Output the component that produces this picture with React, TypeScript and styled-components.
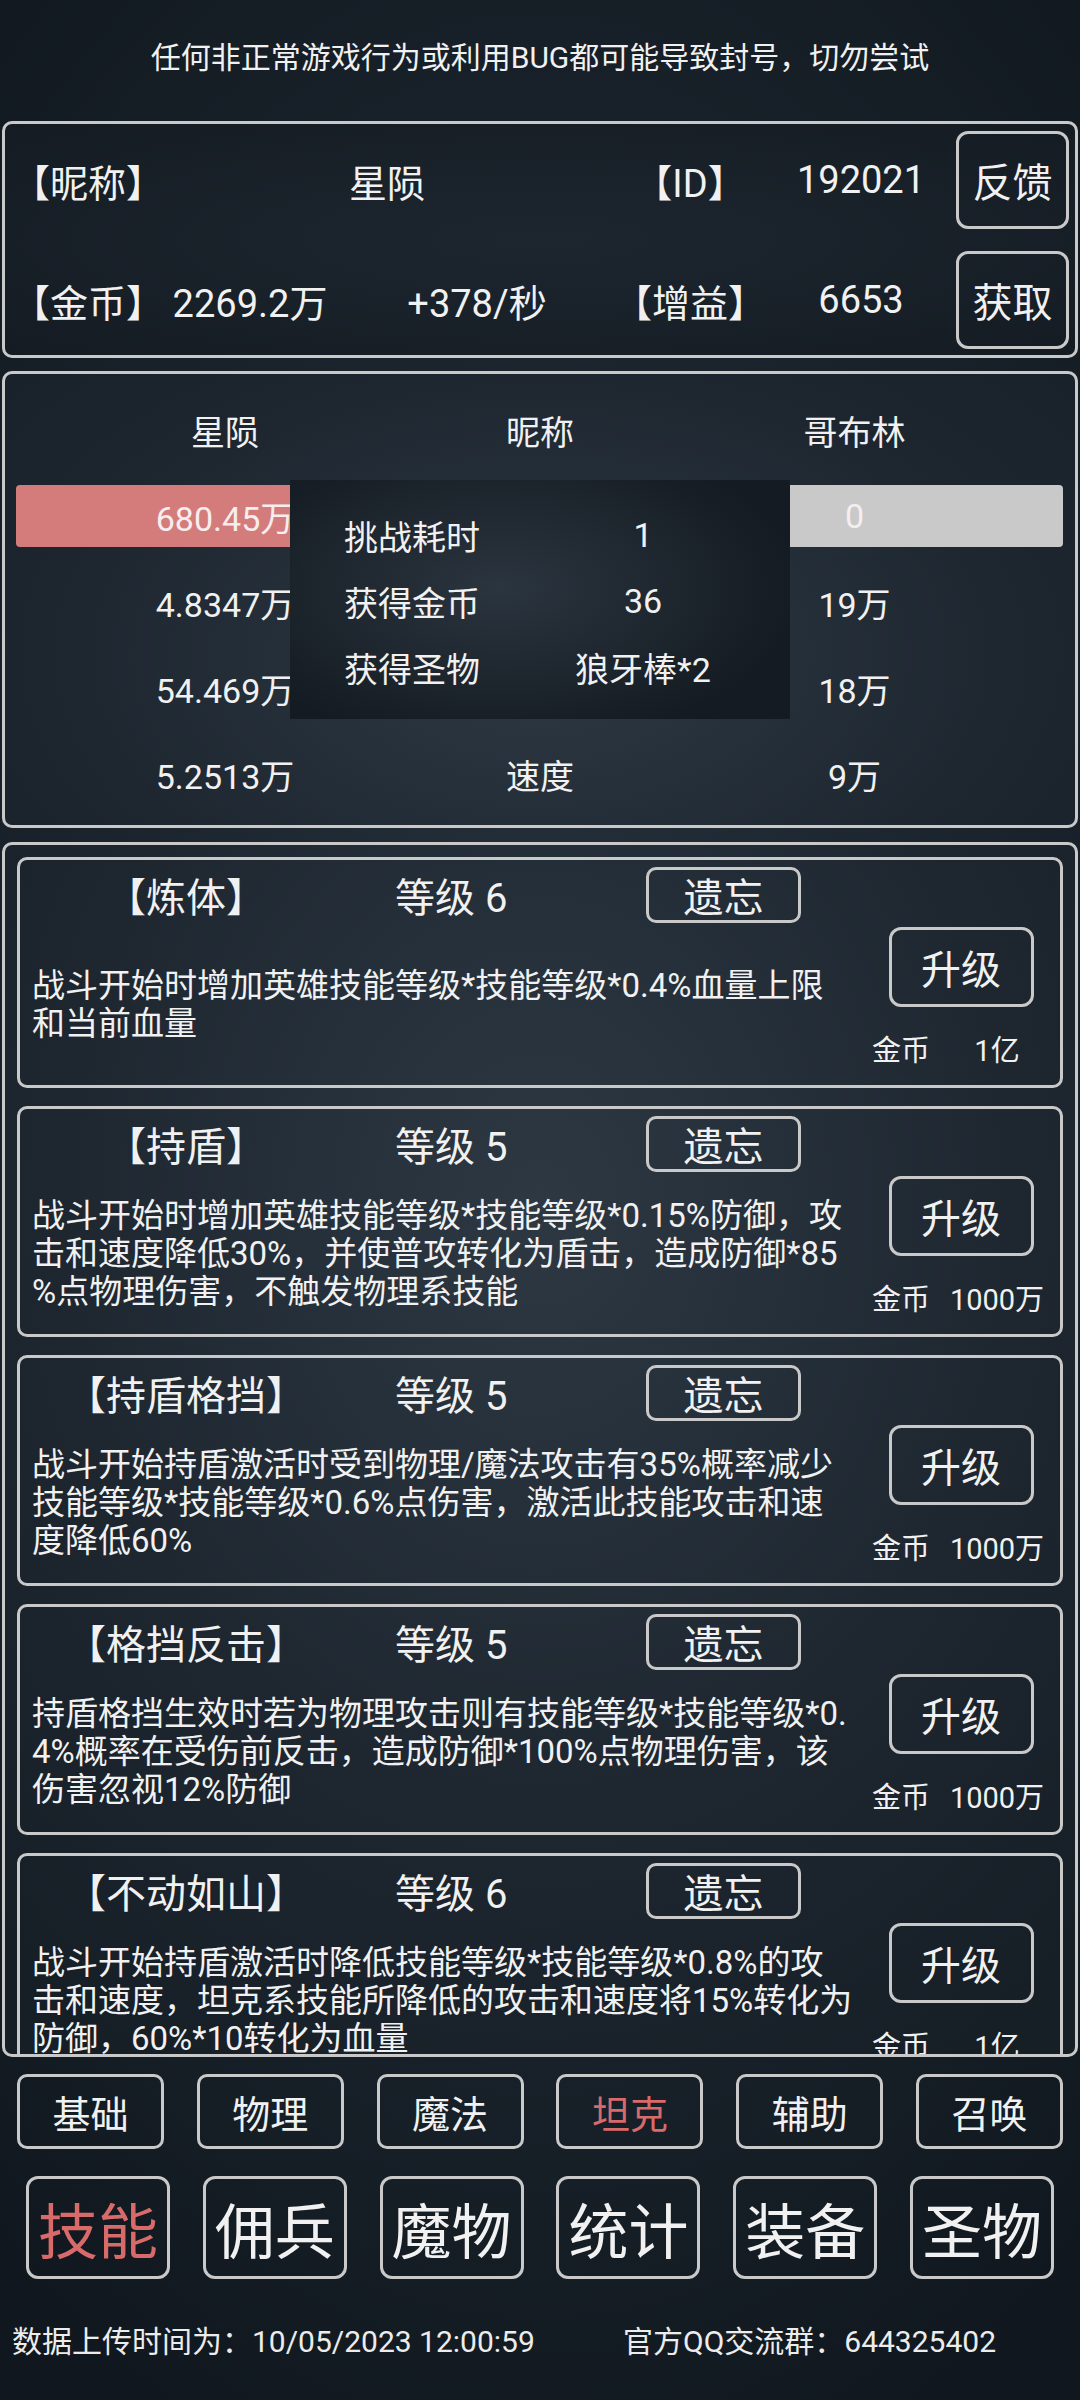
import React from 'react';
import styled, { createGlobalStyle, css } from 'styled-components';

const FONT = `Roboto, "Noto Sans CJK SC", "Noto Sans", sans-serif`;
const LINE = '#c9c9c9';
const TEXT = '#f1f1f1';
const RED = '#d96a6a';

const GlobalStyle = createGlobalStyle`
  html, body { margin: 0; padding: 0; }
  body {
    width: 1080px;
    height: 2400px;
    overflow: hidden;
    background: radial-gradient(ellipse 900px 1500px at 50% 45%, #26313b 0%, #1a232c 55%, #10171e 100%);
    font-family: ${FONT};
    color: ${TEXT};
  }
  * { box-sizing: border-box; }
`;

const Screen = styled.div`
  width: 1080px;
  height: 2400px;
  display: flex;
  flex-direction: column;
`;

const Notice = styled.div`
  height: 116px;
  padding-bottom: 6px;
  display: flex;
  align-items: center;
  justify-content: center;
  font-size: 30px;
`;

const Panel = styled.section`
  margin: 0 2px;
  border: 3px solid ${LINE};
  border-radius: 10px;
`;

/* ---------- player info ---------- */
const InfoPanel = styled(Panel)`
  margin-top: 5px;
  padding: 7px 6px 6px 7px;
  display: grid;
  grid-template-columns: 148px 180px 274px 152px 190px 113px;
  grid-template-rows: 98px 98px;
  row-gap: 22px;
  align-items: center;
  font-size: 38px;
  background: radial-gradient(ellipse at 50% 50%, #1d262f 0%, #141b23 100%);
`;

const Label = styled.span`
  justify-self: start;
  white-space: nowrap;
`;

const Cell = styled.span<{ $span?: number }>`
  justify-self: center;
  white-space: nowrap;
  ${({ $span }) =>
    $span &&
    css`
      grid-column: span ${$span};
    `}
`;

const BoxButton = styled.button`
  display: flex;
  align-items: center;
  justify-content: center;
  padding: 0;
  background: transparent;
  color: ${TEXT};
  font-family: ${FONT};
  border: 3px solid ${LINE};
  border-radius: 12px;
`;

const SideButton = styled(BoxButton)`
  width: 113px;
  height: 98px;
  font-size: 40px;
`;

/* ---------- battle ---------- */
const BattlePanel = styled(Panel)`
  position: relative;
  margin-top: 13px;
  padding: 25px 12px 20px 11px;
  display: flex;
  flex-direction: column;
  gap: 24px;
  font-size: 34px;
  background: radial-gradient(ellipse 700px 420px at 50% 62%, #2e3944 0%, #1d262f 70%, #19212a 100%);
`;

const StatRow = styled.div<{ $hp?: boolean }>`
  height: 62px;
  display: grid;
  grid-template-columns: 418px 1fr 417px;
  align-items: center;
  justify-items: center;
  ${({ $hp }) =>
    $hp &&
    css`
      border-radius: 4px;
      background: linear-gradient(to right, #d47c7c 50%, #c9c9c9 50%);
      color: #f6eeee;
    `}
`;

const ResultBox = styled.div`
  position: absolute;
  left: 285px;
  top: 106px;
  width: 500px;
  height: 239px;
  padding: 22px 0 19px 54px;
  display: grid;
  grid-template-columns: 196px 206px;
  grid-auto-rows: 66px;
  align-items: center;
  background: radial-gradient(ellipse 300px 160px at 42% 45%, #2b353f 0%, #18202800 100%), #141b22;
`;

const ResultValue = styled.span`
  justify-self: center;
  white-space: nowrap;
`;

/* ---------- skills ---------- */
const SkillPanel = styled(Panel)`
  margin-top: 14px;
  height: 1215px;
  overflow: hidden;
  padding: 12px 12px 0;
  display: flex;
  flex-direction: column;
  gap: 18px;
  background: radial-gradient(ellipse 800px 1000px at 50% 30%, #2d3843 0%, #1e2730 60%, #161e26 100%);
`;

const Card = styled.div`
  flex-shrink: 0;
  height: 231px;
  border: 3px solid ${LINE};
  border-radius: 10px;
  display: flex;
  flex-direction: column;
`;

const CardHead = styled.div`
  padding-top: 5px;
  height: 64px;
  display: grid;
  grid-template-columns: 332px 294px 155px;
  align-items: center;
  font-size: 40px;
`;

const SkillName = styled.span`
  justify-self: center;
  white-space: nowrap;
`;

const SkillLevel = styled.span`
  padding-left: 43px;
  white-space: nowrap;
`;

const ForgetButton = styled(BoxButton)`
  width: 155px;
  height: 56px;
  border-radius: 10px;
  font-size: 40px;
`;

const CardBody = styled.div`
  flex: 1;
  display: flex;
`;

const Desc = styled.div`
  flex: 1;
  padding-left: 12px;
  display: flex;
  flex-direction: column;
  justify-content: center;
  font-size: 33px;
  line-height: 38px;
  white-space: nowrap;
`;

const Side = styled.div`
  width: 178px;
  margin-right: 10px;
  padding-top: 3px;
  display: flex;
  flex-direction: column;
  align-items: center;
`;

const UpgradeButton = styled(BoxButton)`
  width: 145px;
  height: 80px;
  font-size: 40px;
`;

const Cost = styled.div`
  margin-top: 20px;
  height: 36px;
  width: 178px;
  display: grid;
  grid-template-columns: 75px 100px;
  align-items: center;
  font-size: 29px;
  span:last-child {
    justify-self: center;
  }
`;

/* ---------- tabs ---------- */
const CategoryRow = styled.div`
  margin-top: 17px;
  padding: 0 17px;
  display: flex;
  justify-content: space-between;
`;

const CategoryButton = styled(BoxButton)<{ $active?: boolean }>`
  width: 147px;
  height: 75px;
  border-radius: 10px;
  font-size: 38px;
  color: ${({ $active }) => ($active ? RED : TEXT)};
`;

const MainTabRow = styled.div`
  margin-top: 27px;
  padding: 0 26px;
  display: flex;
  justify-content: space-between;
`;

const MainTab = styled(BoxButton)<{ $active?: boolean }>`
  width: 144px;
  height: 103px;
  font-size: 60px;
  color: ${({ $active }) => ($active ? RED : TEXT)};
`;

const Footer = styled.div`
  margin-top: 43px;
  padding-left: 12px;
  display: grid;
  grid-template-columns: 611px 1fr;
  font-size: 30px;
  line-height: 40px;
  color: #ececec;
  white-space: nowrap;
`;

const skills = [
  {
    name: '【炼体】',
    level: 6,
    cost: '1亿',
    lines: ['战斗开始时增加英雄技能等级*技能等级*0.4%血量上限', '和当前血量'],
  },
  {
    name: '【持盾】',
    level: 5,
    cost: '1000万',
    lines: [
      '战斗开始时增加英雄技能等级*技能等级*0.15%防御，攻',
      '击和速度降低30%，并使普攻转化为盾击，造成防御*85',
      '%点物理伤害，不触发物理系技能',
    ],
  },
  {
    name: '【持盾格挡】',
    level: 5,
    cost: '1000万',
    lines: [
      '战斗开始持盾激活时受到物理/魔法攻击有35%概率减少',
      '技能等级*技能等级*0.6%点伤害，激活此技能攻击和速',
      '度降低60%',
    ],
  },
  {
    name: '【格挡反击】',
    level: 5,
    cost: '1000万',
    lines: [
      '持盾格挡生效时若为物理攻击则有技能等级*技能等级*0.',
      '4%概率在受伤前反击，造成防御*100%点物理伤害，该',
      '伤害忽视12%防御',
    ],
  },
  {
    name: '【不动如山】',
    level: 6,
    cost: '1亿',
    lines: [
      '战斗开始持盾激活时降低技能等级*技能等级*0.8%的攻',
      '击和速度，坦克系技能所降低的攻击和速度将15%转化为',
      '防御，60%*10转化为血量',
    ],
  },
];

const stats = [
  ['4.8347万', '攻击', '19万'],
  ['54.469万', '防御', '18万'],
  ['5.2513万', '速度', '9万'],
];

const categories = ['基础', '物理', '魔法', '坦克', '辅助', '召唤'];
const mainTabs = ['技能', '佣兵', '魔物', '统计', '装备', '圣物'];

export default function App() {
  return (
    <Screen>
      <GlobalStyle />
      <Notice>任何非正常游戏行为或利用BUG都可能导致封号，切勿尝试</Notice>

      <InfoPanel>
        <Label>【昵称】</Label>
        <Cell $span={2}>星陨</Cell>
        <Cell>【ID】</Cell>
        <Cell>192021</Cell>
        <SideButton>反馈</SideButton>
        <Label>【金币】</Label>
        <Cell>2269.2万</Cell>
        <Cell>+378/秒</Cell>
        <Cell>【增益】</Cell>
        <Cell>6653</Cell>
        <SideButton>获取</SideButton>
      </InfoPanel>

      <BattlePanel>
        <StatRow>
          <span>星陨</span>
          <span>昵称</span>
          <span>哥布林</span>
        </StatRow>
        <StatRow $hp>
          <span>680.45万</span>
          <span>血量</span>
          <span>0</span>
        </StatRow>
        {stats.map((row) => (
          <StatRow key={row[1]}>
            {row.map((v, i) => (
              <span key={i}>{v}</span>
            ))}
          </StatRow>
        ))}
        <ResultBox>
          <span>挑战耗时</span>
          <ResultValue>1</ResultValue>
          <span>获得金币</span>
          <ResultValue>36</ResultValue>
          <span>获得圣物</span>
          <ResultValue>狼牙棒*2</ResultValue>
        </ResultBox>
      </BattlePanel>

      <SkillPanel>
        {skills.map((s) => (
          <Card key={s.name}>
            <CardHead>
              <SkillName>{s.name}</SkillName>
              <SkillLevel>等级 {s.level}</SkillLevel>
              <ForgetButton>遗忘</ForgetButton>
            </CardHead>
            <CardBody>
              <Desc>
                {s.lines.map((l) => (
                  <div key={l}>{l}</div>
                ))}
              </Desc>
              <Side>
                <UpgradeButton>升级</UpgradeButton>
                <Cost>
                  <span>金币</span>
                  <span>{s.cost}</span>
                </Cost>
              </Side>
            </CardBody>
          </Card>
        ))}
      </SkillPanel>

      <CategoryRow>
        {categories.map((c) => (
          <CategoryButton key={c} $active={c === '坦克'}>
            {c}
          </CategoryButton>
        ))}
      </CategoryRow>

      <MainTabRow>
        {mainTabs.map((t) => (
          <MainTab key={t} $active={t === '技能'}>
            {t}
          </MainTab>
        ))}
      </MainTabRow>

      <Footer>
        <span>数据上传时间为：10/05/2023 12:00:59</span>
        <span>官方QQ交流群：644325402</span>
      </Footer>
    </Screen>
  );
}
